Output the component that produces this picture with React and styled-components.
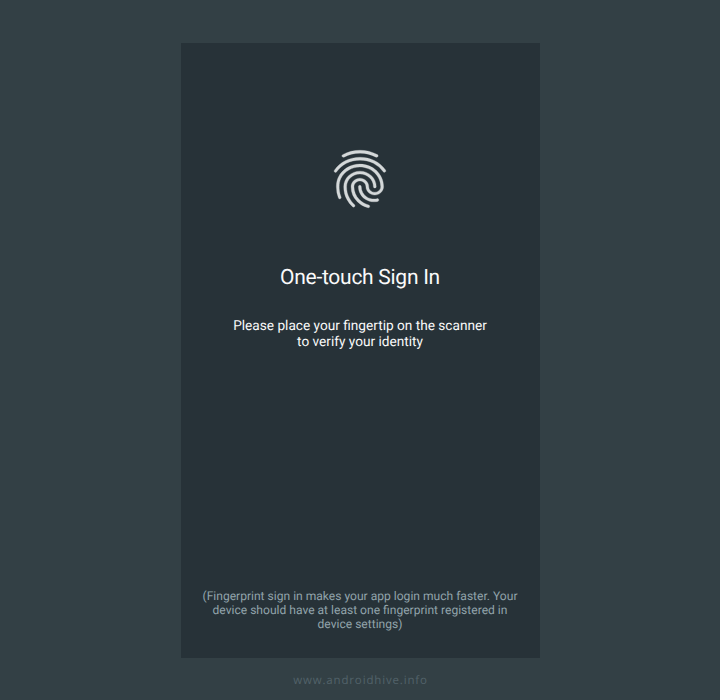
import React from "react";
import styled, { createGlobalStyle } from "styled-components";
import { MdFingerprint } from "react-icons/md";

const GlobalStyle = createGlobalStyle`
  * { box-sizing: border-box; }
  body { margin: 0; background: #334045; }
`;

const Page = styled.main`
  width: 720px;
  height: 700px;
  display: flex;
  flex-direction: column;
  align-items: center;
  padding-top: 43px;
  background: #334045;
  font-family: Roboto, sans-serif;
  text-rendering: geometricPrecision;
`;

const Screen = styled.section`
  width: 359px;
  height: 615px;
  flex: none;
  display: flex;
  flex-direction: column;
  align-items: center;
  padding: 101px 0 27px;
  background: #273238;
  color: #fafafa;
  text-align: center;
`;

const Fingerprint = styled(MdFingerprint)`
  width: 70px;
  height: 70px;
  padding: 0.5px;
  flex: none;
  color: #d4d8d9;

  path:last-child {
    stroke: #d4d8d9;
    stroke-width: 0.1px;
  }
`;

const Title = styled.h1`
  margin: 52px 0 0;
  font-size: 21px;
  font-weight: 400;
  line-height: 24px;
  letter-spacing: -0.27px;
`;

const Prompt = styled.p`
  margin: 28px 0 0;
  font-size: 13.65px;
  line-height: 16px;
`;

const Note = styled.p`
  margin: auto 0 0;
  font-size: 12.07px;
  line-height: 14px;
  color: #92a4ab;
`;

const Site = styled.footer`
  margin-top: 15px;
  padding-left: 1px;
  font-family: "Open Sans", sans-serif;
  font-size: 11.5px;
  line-height: 16px;
  letter-spacing: 0.85px;
  color: #526269;
`;

export default function App() {
  return (
    <>
      <GlobalStyle />
      <Page>
        <Screen>
          <Fingerprint />
          <Title>One-touch Sign In</Title>
          <Prompt>Please place your fingertip on the scanner<br />to verify your identity</Prompt>
          <Note>(Fingerprint sign in makes your app login much faster. Your<br />device should have at least one fingerprint registered in<br />device settings)</Note>
        </Screen>
        <Site>www.androidhive.info</Site>
      </Page>
    </>
  );
}
